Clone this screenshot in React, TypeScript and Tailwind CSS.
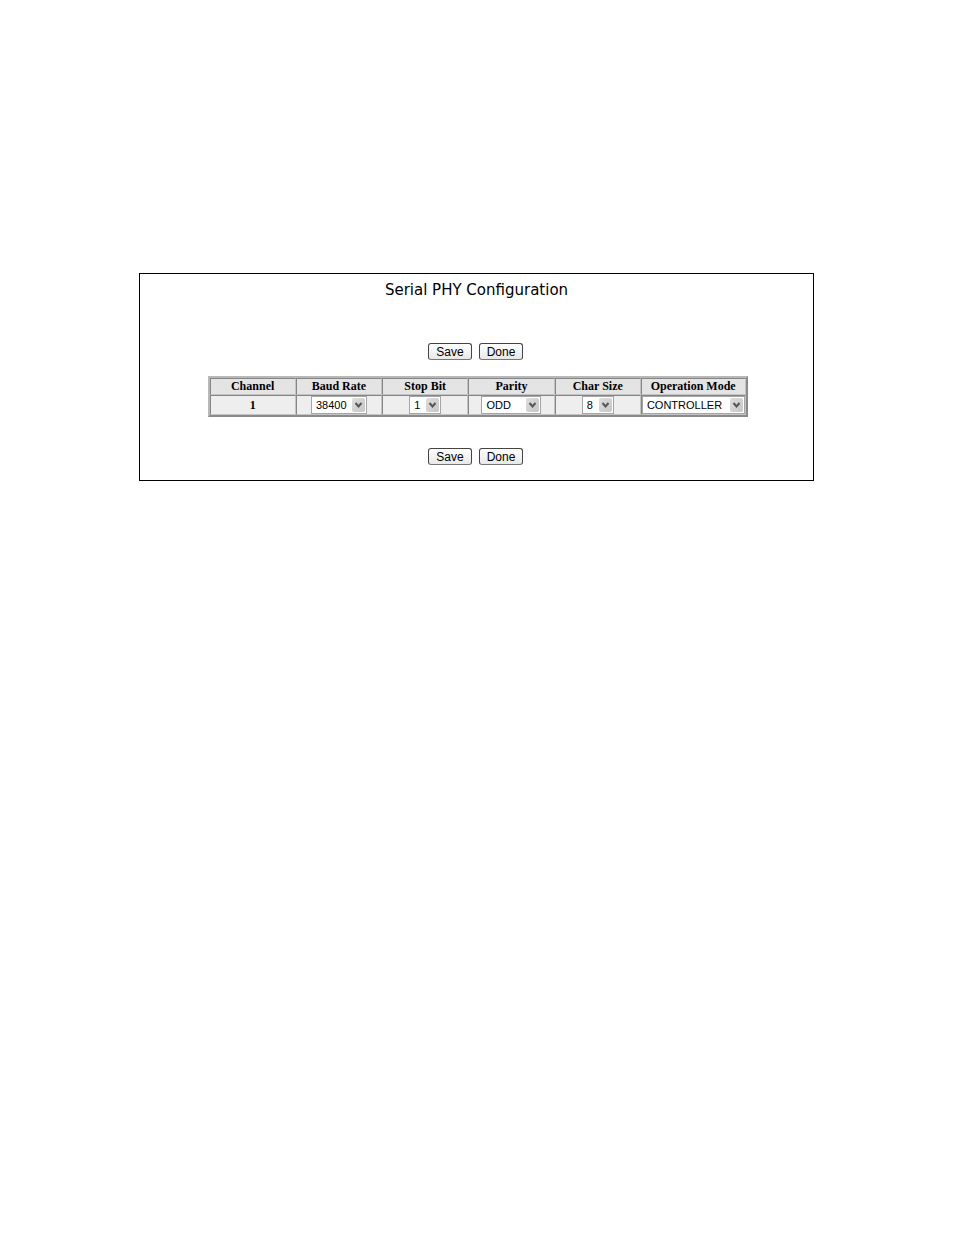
import React, { useState } from 'react';

interface Column {
  key: string;
  label: string;
  options: string[];
  selectClass: string;
}

const columns: Column[] = [
  { key: 'baudRate', label: 'Baud Rate', options: ['38400', '19200', '9600'], selectClass: 'w-14' },
  { key: 'stopBit', label: 'Stop Bit', options: ['1', '2'], selectClass: 'w-8' },
  { key: 'parity', label: 'Parity', options: ['ODD', 'EVEN', 'NONE'], selectClass: 'w-15' },
  { key: 'charSize', label: 'Char Size', options: ['8', '7'], selectClass: 'w-8' },
  { key: 'mode', label: 'Operation Mode', options: ['CONTROLLER', 'DEVICE'], selectClass: 'w-[103px]' },
];

const cell = 'border border-t-[#858585] border-l-[#858585] border-r-[#c4c4c4] border-b-[#c4c4c4] p-0';

const FormButton = ({ children }: { children: React.ReactNode }) => (
  <button
    type="button"
    className="h-[17px] w-11 rounded-[3px] border border-[#444] border-b-[#777] bg-linear-to-b from-white to-[#e8e8e8] pt-px text-[12px] leading-[15px]"
  >
    {children}
  </button>
);

const FormButtons = () => (
  <div className="flex justify-center gap-[7px] pr-[2px]">
    <FormButton>Save</FormButton>
    <FormButton>Done</FormButton>
  </div>
);

const SelectBox = ({ column }: { column: Column }) => {
  const [value, setValue] = useState(column.options[0]);

  return (
    <div className={`relative mx-auto h-[18px] ${column.selectClass}`}>
      <select
        aria-label={column.label}
        value={value}
        onChange={(e) => setValue(e.target.value)}
        className="block h-full w-full appearance-none border border-[#a5a5a5] bg-white pl-1 font-['Liberation_Sans',sans-serif] text-[11px] leading-4"
      >
        {column.options.map((option) => (
          <option key={option}>{option}</option>
        ))}
      </select>
      <span className="pointer-events-none absolute top-[2px] right-[2px] flex h-[14px] w-[13px] items-center justify-center rounded-[2px] bg-linear-to-br from-[#dedede] to-[#c6c6c6]">
        <svg width="9" height="7" viewBox="0 0 9 7" fill="none" stroke="#555" strokeWidth="2">
          <path d="M1.5 1L4.5 4.5L7.5 1" />
        </svg>
      </span>
    </div>
  );
};

export default function App() {
  return (
    <div className="pt-[273px] pr-[140px] pl-[139px] font-['Liberation_Sans',sans-serif] text-black">
      <main className="border border-black pt-1 pb-[15px]">
        <h1 className="text-center font-['DejaVu_Sans',sans-serif] text-[15px] leading-6">
          Serial PHY Configuration
        </h1>

        <div className="mt-[41px]">
          <FormButtons />
        </div>

        <div className="mt-4 pl-[2px]">
          <table className="mx-auto w-[540px] max-w-full table-fixed border-separate border-spacing-0 border-2 border-t-[#b8b8b8] border-l-[#b8b8b8] border-r-[#8a8a8a] border-b-[#8a8a8a] text-center font-['Liberation_Serif',serif] text-[12px] leading-[15px]">
            <colgroup>
              <col span={5} className="w-[16.1%]" />
              <col />
            </colgroup>
            <thead className="bg-[#e4e4e4]">
              <tr>
                <th className={cell}>Channel</th>
                {columns.map((column) => (
                  <th key={column.key} className={cell}>
                    {column.label}
                  </th>
                ))}
              </tr>
            </thead>
            <tbody className="bg-[#eee]">
              <tr>
                <th scope="row" className={cell}>1</th>
                {columns.map((column) => (
                  <td key={column.key} className={cell}>
                    <SelectBox column={column} />
                  </td>
                ))}
              </tr>
            </tbody>
          </table>
        </div>

        <div className="mt-[31px]">
          <FormButtons />
        </div>
      </main>
    </div>
  );
}
